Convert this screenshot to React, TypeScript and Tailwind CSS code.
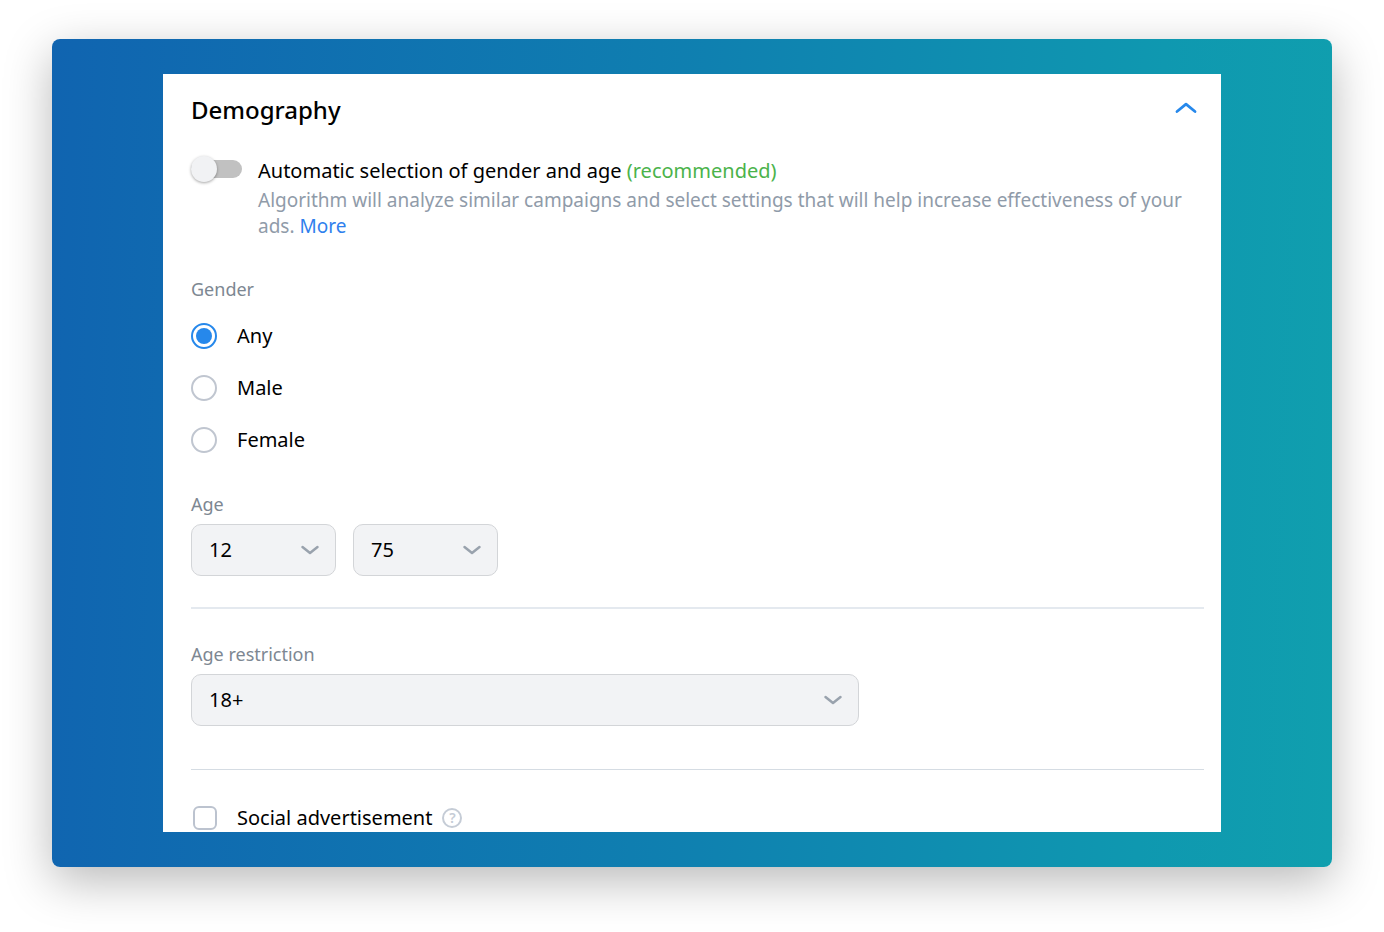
import { useState } from "react";

function SelectArrow() {
  return (
    <svg className="pointer-events-none col-start-1 row-start-1 mr-4 self-center justify-self-end" width="20" height="12" viewBox="0 0 20 12" fill="none">
      <path d="M2.5 3L10 9L17.5 3" stroke="#99a2ad" strokeWidth="2.5" strokeLinecap="round" strokeLinejoin="round" />
    </svg>
  );
}

function Select({ id, label, options, value }: { id: string; label: string; options: string[]; value: string }) {
  return (
    <div className="grid">
      <select
        id={id}
        aria-label={label}
        defaultValue={value}
        className="col-start-1 row-start-1 h-13 w-full appearance-none rounded-[10px] border border-[#d3d5d8] bg-[#f2f3f5] pl-[17px] pr-12 text-xl text-black"
      >
        {options.map((option) => (
          <option key={option}>{option}</option>
        ))}
      </select>
      <SelectArrow />
    </div>
  );
}

const genders = ["Any", "Male", "Female"];

export default function App() {
  const [gender, setGender] = useState("Any");

  return (
    <div className="min-h-screen bg-white px-[52px] pt-[39px] pb-[65px] font-['Noto_Sans','Open_Sans',sans-serif] text-black">
      <div className="rounded-lg bg-linear-[92deg,#1064b0,#0f80b0_50%,#0f98b0_85%,#109fae] px-[111px] py-[35px] shadow-[0_14px_48px_rgba(0,0,0,0.28)]">
        <main className="bg-white pt-[18px] pr-[17px] pl-7">
          {/* Section header */}
          <header className="flex h-9 items-center justify-between">
            <h1 className="text-2xl font-medium">Demography</h1>
            <button aria-label="Collapse section" className="mr-1.5 pb-1">
              <svg width="24" height="16" viewBox="0 0 24 16" fill="none">
                <path d="M3 11.5L12 4.2L21 11.5" stroke="#2688eb" strokeWidth="2.8" strokeLinecap="round" strokeLinejoin="round" />
              </svg>
            </button>
          </header>

          {/* Automatic selection */}
          <div className="mt-[27px] flex gap-4">
            <input
              id="auto"
              type="checkbox"
              role="switch"
              className="mt-[5px] h-[18px] w-[51px] shrink-0 appearance-none rounded-full bg-[#c1c1c1] before:-mt-1 before:block before:size-[26px] before:rounded-full before:bg-[#f1f2f4] before:shadow-[0_1px_3px_rgba(0,0,0,0.35)] checked:bg-[#2688eb] checked:before:ml-auto"
            />
            <div>
              <label htmlFor="auto" className="block text-xl leading-8">
                Automatic selection of gender and age <span className="text-[#4bb34b]">(recommended)</span>
              </label>
              <p className="text-[19px] leading-[26px] text-[#909ba9]">
                Algorithm will analyze similar campaigns and select settings that will help increase effectiveness of your ads.{" "}
                <a href="#" className="inline-block text-[#2f80ed]">More</a>
              </p>
            </div>
          </div>

          {/* Gender */}
          <fieldset className="mt-[37px]">
            <legend className="mb-2 text-lg leading-[26px] text-[#7d8792]">Gender</legend>
            {genders.map((item) => (
              <label key={item} className="flex h-13 items-center gap-5 text-xl">
                <input
                  type="radio"
                  name="gender"
                  checked={gender === item}
                  onChange={() => setGender(item)}
                  className="grid size-[26px] appearance-none place-items-center rounded-full border-2 border-[#c0c6d0] before:size-4 before:rounded-full checked:border-[#2688eb] checked:before:bg-[#2688eb]"
                />
                {item}
              </label>
            ))}
          </fieldset>

          {/* Age */}
          <label htmlFor="age-from" className="mt-[25px] block text-lg leading-[26px] text-[#7d8792]">Age</label>
          <div className="mt-[7px] grid grid-cols-[145px_145px] gap-[17px]">
            <Select id="age-from" label="Age from" value="12" options={["12", "18", "25", "35"]} />
            <Select id="age-to" label="Age to" value="75" options={["35", "45", "55", "75"]} />
          </div>

          <hr className="mt-[31px] border-t-2 border-[#e4e9ef]" />

          {/* Age restriction */}
          <label htmlFor="restriction" className="mt-8 block text-lg leading-[26px] text-[#7d8792]">Age restriction</label>
          <div className="mt-[7px] max-w-[668px]">
            <Select id="restriction" label="Age restriction" value="18+" options={["0+", "6+", "12+", "16+", "18+"]} />
          </div>

          <hr className="mt-[43px] border-[#d5dce3]" />

          {/* Social advertisement */}
          <div className="mt-[34px] flex h-7 items-center gap-2.5">
            <label className="flex items-center gap-5 text-xl">
              <input
                type="checkbox"
                className="ml-0.5 size-6 appearance-none rounded-md border-2 border-[#bcc3cf] checked:bg-[#2688eb]"
              />
              Social advertisement
            </label>
            <button aria-label="Help" className="flex size-5 items-center justify-center rounded-full border-2 border-[#c5ccd6] text-sm font-semibold text-[#c5ccd6]">
              ?
            </button>
          </div>
        </main>
      </div>
    </div>
  );
}
